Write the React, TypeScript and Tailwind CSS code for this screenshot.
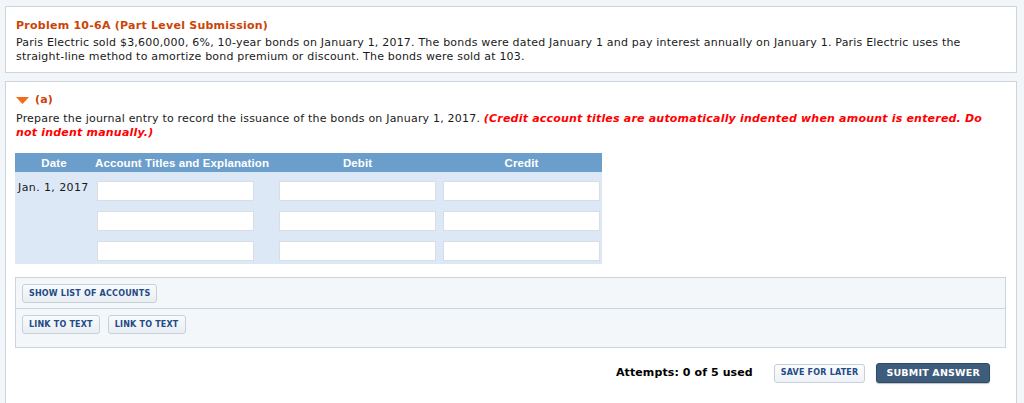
import React from "react";

const rows = [0, 1, 2];

function Field() {
  return <div className="h-[20px] w-[157px] border border-[#d9dee4] bg-white" />;
}

function SmallButton({ label }: { label: string }) {
  return (
    <button className="h-[19px] rounded-[3px] border border-[#c6d0db] bg-gradient-to-b from-[#f9fbfd] to-[#e9eef3] px-[6px] text-[8px] font-bold leading-none text-[#234a85]">
      {label}
    </button>
  );
}

export default function App() {
  return (
    <div className="min-h-[403px] bg-[#f3f6f9] pl-[5px] pr-[7px] pt-[6px] font-['DejaVu_Sans',Verdana,sans-serif] text-[11px] leading-[14px] tracking-[0.2px] text-[#1a1a1a]">
      {/* problem statement */}
      <div className="h-[67px] border border-[#cbd5df] bg-white px-[10px] pt-[12px]">
        <div className="font-bold tracking-[0.25px] text-[#cc4406]">Problem 10-6A (Part Level Submission)</div>
        <p className="mt-[3px]">
          Paris Electric sold $3,600,000, 6%, 10-year bonds on January 1, 2017. The bonds were dated January 1 and pay
          interest annually on January 1. Paris Electric uses the straight-line method to amortize bond premium or
          discount. The bonds were sold at 103.
        </p>
      </div>

      {/* part (a) */}
      <div className="mt-[8px] h-[330px] border border-b-0 border-[#cbd5df] bg-white pl-[9px] pr-[10px] pt-[11px]">
        <div className="flex items-center gap-[6px] pl-px font-bold text-[#cc4406]">
          <svg width="13" height="7" viewBox="0 0 13 7">
            <polygon points="0,0 13,0 6.5,7" fill="#f26a1b" />
          </svg>
          <span>(a)</span>
        </div>
        <p className="mt-[5px] pl-px pr-[20px]">
          Prepare the journal entry to record the issuance of the bonds on January 1, 2017.{" "}
          <span className="font-bold italic text-[#ff0000]">
            (Credit account titles are automatically indented when amount is entered. Do not indent manually.)
          </span>
        </p>

        <div className="mt-[13px] w-[587px]">
          <div className="grid h-[19px] grid-cols-[82px_182px_164px_159px] items-center whitespace-nowrap bg-[#6b9ecb] font-['Liberation_Sans',Arial,sans-serif] text-[11.5px] font-bold tracking-[0.1px] text-white">
            <div className="pr-[4px] text-center">Date</div>
            <div className="-ml-[2px]">Account Titles and Explanation</div>
            <div className="w-[157px] text-center">Debit</div>
            <div className="w-[157px] text-center">Credit</div>
          </div>
          <div className="grid grid-cols-[82px_182px_164px_159px] bg-[#dde8f6] pb-[3px] pt-[9px]">
            <div className="pl-[3px] pt-[2px] leading-[10px] tracking-[0.4px]">Jan. 1, 2017</div>
            {[1, 2, 3].map((c) => (
              <div key={c} className="flex flex-col gap-[10px]" style={{ gridRow: 1, gridColumn: c + 1 }}>
                {rows.map((r) => (
                  <Field key={r} />
                ))}
              </div>
            ))}
          </div>
        </div>

        <div className="mt-[13px] border border-[#cbd5df] bg-[#f4f7fa]">
          <div className="h-[31px] border-b border-[#cbd5df] pl-[6px] pt-[6px]">
            <SmallButton label="SHOW LIST OF ACCOUNTS" />
          </div>
          <div className="flex h-[38px] gap-[8px] pl-[6px] pt-[6px]">
            <SmallButton label="LINK TO TEXT" />
            <SmallButton label="LINK TO TEXT" />
          </div>
        </div>

        <div className="mt-[15px] flex items-center justify-end pr-[16px]">
          <span className="text-[11px] font-bold tracking-[0.1px] text-black">Attempts: 0 of 5 used</span>
          <button className="ml-[21px] h-[19px] rounded-[3px] border border-[#c6d0db] bg-gradient-to-b from-[#fbfcfe] to-[#eef2f6] px-[6px] text-[8px] font-bold leading-none text-[#234a85]">
            SAVE FOR LATER
          </button>
          <button className="ml-[11px] h-[20px] rounded-[3px] border border-[#2f4a66] bg-[#3e5c7c] px-[9px] text-[9.5px] font-bold leading-none text-white shadow-[0_1px_1px_rgba(0,0,0,0.25)]">
            SUBMIT ANSWER
          </button>
        </div>
      </div>
    </div>
  );
}
